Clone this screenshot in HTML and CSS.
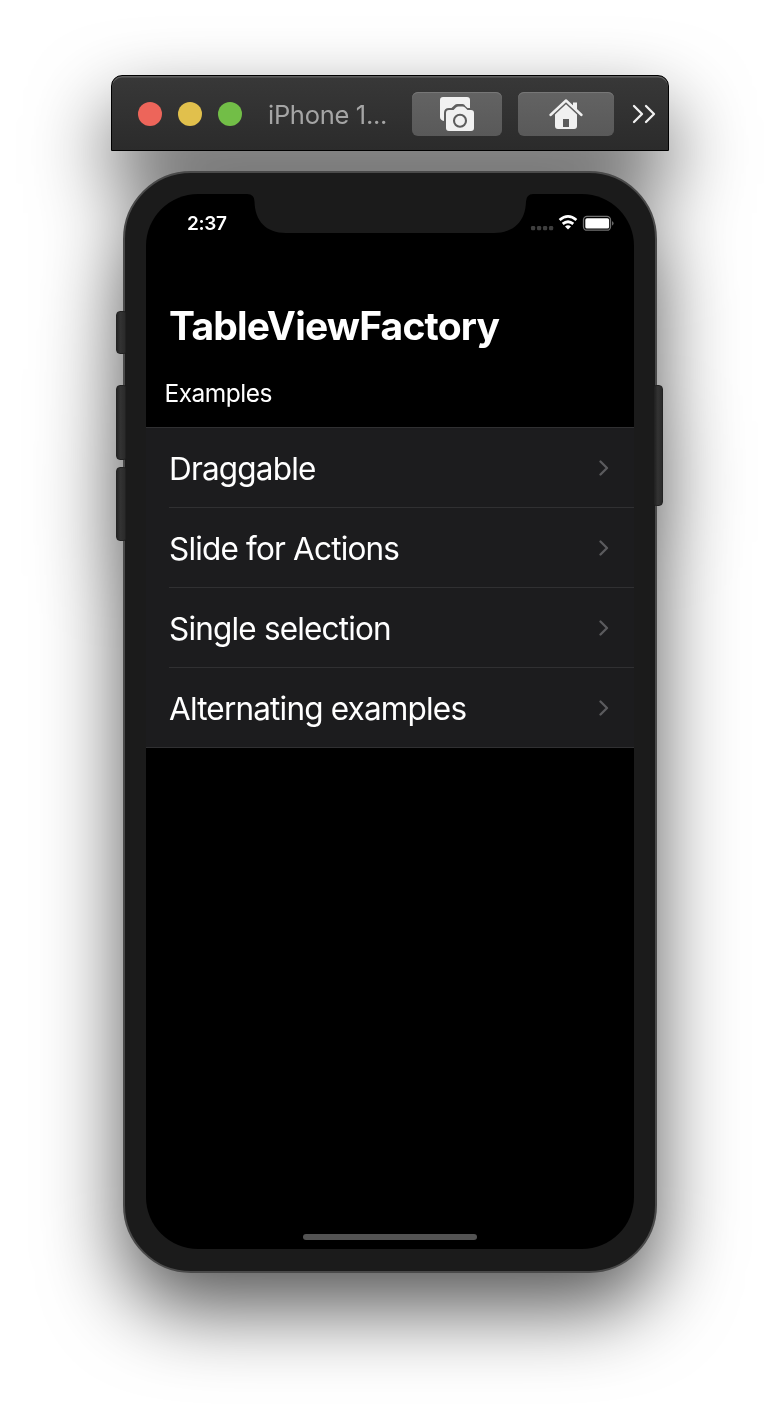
FILE: index.html
```html
<!DOCTYPE html>
<html lang="en">
<head>
<meta charset="utf-8">
<title>Simulator</title>
<link rel="stylesheet" href="styles.css">
</head>
<body>
<main class="window">
  <header class="titlebar">
    <div class="lights"><i class="light red"></i><i class="light yellow"></i><i class="light green"></i></div>
    <span class="window-title">iPhone 1...</span>
    <button class="tool camera" aria-label="Screenshot">
      <svg width="36" height="36" viewBox="0 0 36 36">
        <path fill="#f1f1f1" d="M4 1h24q3 0 3 3v8h-2.500l-2-1.800Q25.300 8 23.500 8h-5q-1.800 0-3 1.200L12.500 12H10q-5 0-5 5v8Q1 24 1 21V4q0-3 3-3Z"/>
        <path fill="#f1f1f1" fill-rule="evenodd" d="M10 14h4.500l2.500-2.500Q18 10.500 19.500 10.500h4Q25 10.500 26 11.500l2.500 2.500H32q3 0 3 3v15q0 3-3 3H10q-3 0-3-3V17q0-3 3-3Z"/>
        <circle cx="21" cy="24.800" r="6" fill="none" stroke="#5d5d5d" stroke-width="2.100"/>
      </svg>
    </button>
    <button class="tool home" aria-label="Home">
      <svg width="36" height="32" viewBox="0 0 36 32">
        <path d="M2.500 17 18 2.500 33.500 17" fill="none" stroke="#f1f1f1" stroke-width="2.400" stroke-linecap="round" stroke-linejoin="round"/>
        <path fill="#f1f1f1" fill-rule="evenodd" d="M18 6.200 29 16.500V28q0 3-3 3H10q-3 0-3-3V16.500ZM15 21v8h6v-8ZM25 4.500h4v9l-4-3.500Z"/>
      </svg>
    </button>
    <svg class="more" width="24" height="20" viewBox="0 0 24 20"><path d="M2 2l8 8-8 8M14 2l8 8-8 8" fill="none" stroke="#f1f1f1" stroke-width="2.300" stroke-linecap="round" stroke-linejoin="round"/></svg>
  </header>
  <section class="phone">
    <i class="key mute"></i><i class="key up"></i><i class="key down"></i><i class="key power"></i>
    <div class="screen">
      <svg class="notch" width="286" height="40" viewBox="0 0 286 40"><path fill="#1b1b1b" d="M0 0Q7.500 0 7.500 7.500C8 27 19 39 39 39H247C267 39 278.500 27 279 7.500Q279.500 0 286 0Z"/></svg>
      <div class="status">
        <span class="clock">2:37</span>
        <svg width="84" height="18" viewBox="0 0 84 18">
          <g fill="#3e3e3e"><rect y="11" width="4.200" height="4.200" rx="1.300"/><rect x="6" y="11" width="4.200" height="4.200" rx="1.300"/><rect x="12" y="11" width="4.200" height="4.200" rx="1.300"/><rect x="18" y="11" width="4.200" height="4.200" rx="1.300"/></g>
          <g fill="none" stroke="#fff" stroke-width="2.800"><path d="M28.600 5Q37 -2.200 45.400 5M31.700 8.900Q37 4.500 42.300 8.900"/></g>
          <path fill="#fff" d="M34 11.500q3-2.500 6 0l-3 3Z"/>
          <rect x="52.500" y="1.400" width="27" height="13.800" rx="3.500" fill="none" stroke="#707070" stroke-width="1.300"/>
          <rect x="54.300" y="3.200" width="23.800" height="10.400" rx="1.700" fill="#fff"/>
          <path fill="#777" d="M81.100 6q3 2.300 0 4.700Z"/>
        </svg>
      </div>
      <h1 class="heading">TableViewFactory</h1>
      <h2 class="section">Examples</h2>
      <ul class="list">
        <li><span>Draggable</span><svg width="10" height="16" viewBox="0 0 10 16"><path d="M1.500 1.500 8 8l-6.500 6.500"/></svg></li>
        <li><span>Slide for Actions</span><svg width="10" height="16" viewBox="0 0 10 16"><path d="M1.500 1.500 8 8l-6.500 6.500"/></svg></li>
        <li><span>Single selection</span><svg width="10" height="16" viewBox="0 0 10 16"><path d="M1.500 1.500 8 8l-6.500 6.500"/></svg></li>
        <li><span>Alternating examples</span><svg width="10" height="16" viewBox="0 0 10 16"><path d="M1.500 1.500 8 8l-6.500 6.500"/></svg></li>
      </ul>
      <div class="indicator"></div>
    </div>
  </section>
</main>
</body>
</html>
```

FILE: styles.css
```css
* { box-sizing: border-box; }
html, body { margin: 0; background: #fff; }
body { display: flow-root; height: 1422px; overflow: hidden; font-family: Inter, "Liberation Sans", sans-serif; }
.window { width: 558px; height: 1198px; margin: 75px auto 0; display: flex; flex-direction: column; align-items: center; gap: 20px; filter: drop-shadow(0 36px 40px rgba(0,0,0,.66)); }
.titlebar { width: 558px; height: 76px; flex: none; display: flex; align-items: center; padding: 2px 11px 0 26px; border: 1px solid #000; border-radius: 11px 11px 0 0; background: linear-gradient(#383838, #2b2b2b); box-shadow: inset 0 1.5px 0 #606060; }
.lights { display: flex; gap: 16px; margin-right: 1px; flex: none; }
.light { width: 24px; height: 24px; border-radius: 50%; }
.red { background: #ed655a; }
.yellow { background: #e1c04c; }
.green { background: #72be47; }
.window-title { width: 144px; padding-left: 25px; color: #a5a5a5; font-size: 25.5px; letter-spacing: -.3px; white-space: nowrap; flex: none; }
.tool { display: grid; place-items: center; height: 44px; padding: 0; border: 0; border-radius: 6px; background: linear-gradient(#636363, #595959); box-shadow: inset 0 1px 0 #777; }
.camera { width: 90px; margin-left: 25px; }
.home { width: 96px; margin-left: 16px; }
.more { margin-left: 18px; flex: none; }
.phone { position: relative; width: 534px; height: 1102px; flex: none; padding: 21px; border: 2px solid #4a4a4a; border-radius: 68px; background: #1b1b1b; }
.key { position: absolute; left: -9px; width: 10px; border-radius: 4px 2px 2px 4px; background: linear-gradient(90deg, #242424, #333 40%, #2a2a2a); border: 1px solid #222; }
.mute { top: 138px; height: 43px; }
.up { top: 212px; height: 75px; }
.down { top: 294px; height: 74px; }
.power { left: auto; right: -8px; top: 212px; height: 121px; width: 9px; border-radius: 2px 4px 4px 2px; }
.screen { position: relative; width: 488px; height: 1055px; overflow: hidden; border-radius: 52px; background: #000; color: #fff; display: flex; flex-direction: column; }
.notch { position: absolute; left: 101px; top: 0; }
.status { height: 58px; padding: 20px 19px 0 41px; display: flex; justify-content: space-between; }
.status svg { margin-top: 1px; overflow: visible; }
.clock { font-size: 19px; line-height: 19px; font-weight: 600; letter-spacing: -.3px; }
.heading { margin: 50px 0 0 23px; font-size: 39px; line-height: 48px; font-weight: 700; letter-spacing: -.8px; }
.section { margin: 27px 0 0 18.5px; font-size: 24.5px; line-height: 32px; font-weight: 400; letter-spacing: -.5px; }
.list { margin: 18px 0 0; padding: 0; height: 321px; list-style: none; background: #1c1c1e; border: 1px solid #303032; border-width: 1px 0; }
.list li { height: 80px; margin-left: 23px; padding-right: 25px; display: flex; align-items: center; justify-content: space-between; border-bottom: 1px solid #303032; font-size: 31.5px; letter-spacing: -.82px; }
.list li:not(:last-child) span { padding-top: 2px; }
.list li:last-child { border-bottom: 0; }
.list path { fill: none; stroke: #5b5b5e; stroke-width: 2.3; stroke-linecap: round; stroke-linejoin: round; }
.indicator { width: 174px; height: 6px; border-radius: 3px; background: #535353; margin: auto auto 9px; }
```
